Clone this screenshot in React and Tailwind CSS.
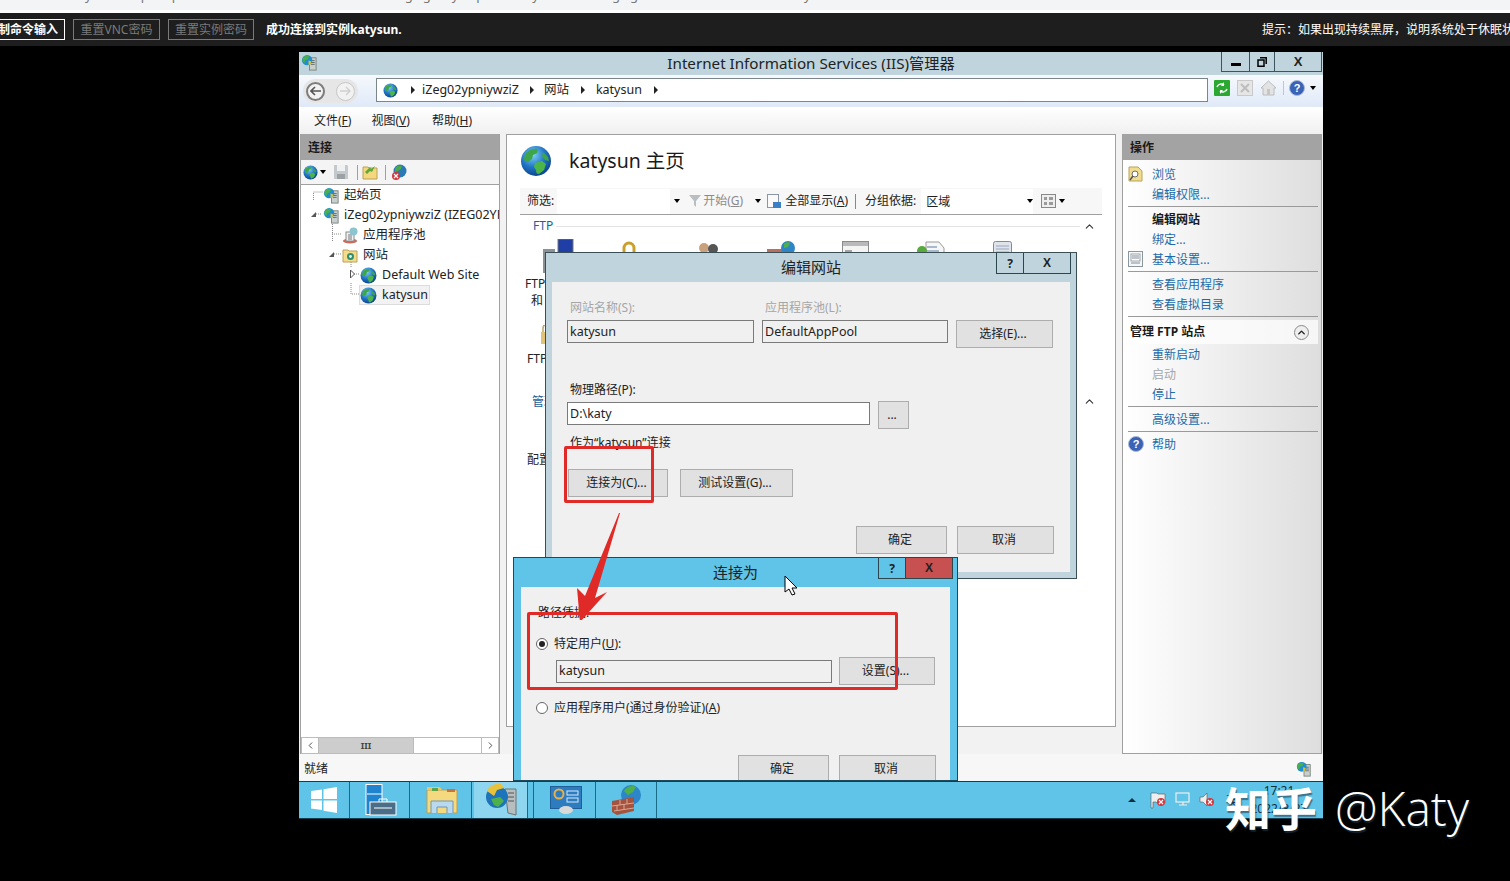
import { ChevronLeft, ChevronRight, ChevronUp } from "lucide-react";

const LINK = "text-[#1d6aa8]";

// --- small drawings ---
function Globe({ size = 16, className = "" }) {
  return (
    <svg width={size} height={size} viewBox="0 0 32 32" className={className}>
      <defs>
        <radialGradient id="globeFill" cx="40%" cy="30%" r="75%">
          <stop offset="0%" stopColor="#7fd0f5" />
          <stop offset="55%" stopColor="#1f74c4" />
          <stop offset="100%" stopColor="#0c3f86" />
        </radialGradient>
      </defs>
      <circle cx="16" cy="16" r="15" fill="url(#globeFill)" />
      <path d="M7 7c3-3 8-4 11-3l-1 4-4 2-1 4-4 3-4-2c0-3 1-6 3-8z" fill="#3fa648" />
      <path d="M15 18l7-2 4 3-2 6-5 4c-2 0-3-1-3-4l-2-3z" fill="#4cb548" />
      <path d="M23 7l5 5 1 4-4-1-3-4z" fill="#3fa648" />
    </svg>
  );
}

function ServerGlobe({ size = 17 }) {
  return (
    <svg width={size} height={size} viewBox="0 0 18 18">
      <rect x="9" y="4" width="7" height="13" fill="#c9cfcf" stroke="#79857f" />
      <path d="M10.5 7h4M10.5 9h4M10.5 11h4" stroke="#5d6b66" />
      <circle cx="6.5" cy="6.5" r="5.5" fill="#1f8fd0" />
      <path d="M2.5 3.5c2-2 5-2 6-1l-1 3-3 1-1 3-2-2c0-2 0-3 1-4z" fill="#49b04b" />
      <path d="M8 7l3 1-1 3-2 1z" fill="#d9c23c" />
    </svg>
  );
}

function Caret({ className = "" }) {
  return <span className={`inline-block border-x-[3px] border-t-[4px] border-x-transparent border-t-black ${className}`} />;
}

function CrumbArrow() {
  return <span className="inline-block border-y-[4px] border-l-[4px] border-y-transparent border-l-[#222]" />;
}

function FolderGlobe() {
  return (
    <svg width="16" height="16" viewBox="0 0 16 16">
      <path d="M1 3h5l1 1h8v11H1z" fill="#f5dc8c" stroke="#b9a05a" />
      <circle cx="8.5" cy="9.5" r="3.5" fill="#2f8f6f" />
      <circle cx="8.5" cy="9.5" r="1.4" fill="#e7f2ea" />
    </svg>
  );
}

function PoolIcon() {
  return (
    <svg width="17" height="17" viewBox="0 0 17 17">
      <ellipse cx="8" cy="14" rx="7" ry="2.5" fill="#c96a5a" />
      <rect x="4" y="5" width="8" height="9" fill="#f1f1f1" stroke="#8a8a8a" />
      <path d="M6 8h4M6 10h4M6 12h4" stroke="#777" />
      <circle cx="11.5" cy="4.5" r="4" fill="#8cc4cf" />
    </svg>
  );
}

function HelpIcon({ size = 16 }) {
  return (
    <svg width={size} height={size} viewBox="0 0 16 16">
      <circle cx="8" cy="8" r="7.5" fill="#3a62b5" stroke="#a9b8d8" />
      <text x="8" y="12" fontSize="11" fontWeight="700" textAnchor="middle" fill="#fff" fontFamily="Liberation Sans, sans-serif">?</text>
    </svg>
  );
}

function RedX({ x, y }) {
  return (
    <g>
      <circle cx={x} cy={y} r="4" fill="#d2383f" />
      <path d={`M${x - 2} ${y - 2}l4 4m0-4l-4 4`} stroke="#fff" strokeWidth="1.1" />
    </g>
  );
}

// --- pieces of the classic dialog ---
function Btn({ children, className = "" }) {
  return (
    <div className={`flex shrink-0 items-center justify-center border border-[#adadad] bg-[#e1e1e1] pr-[3px] text-[12px] text-[#222] ${className}`}>
      {children}
    </div>
  );
}

function Field({ children, className = "" }) {
  return (
    <div className={`flex h-[23px] shrink-0 items-center border border-[#7a7a7a] px-[2px] pt-px text-[12.5px] text-[#222] ${className}`}>
      {children}
    </div>
  );
}

function DialogTitle({ title, closeClass, rightClass }) {
  return (
    <div className="relative h-[29px] text-center text-[15px] leading-[29px] text-[#222]">
      {title}
      <div className={`absolute top-0 flex h-[21px] border-x border-b border-[#2c4650] text-[12px] font-bold ${rightClass}`}>
        <div className="flex w-[27px] items-center justify-center border-r border-[#2c4650]">?</div>
        <div className={`flex w-[46px] items-center justify-center font-['Liberation_Sans',sans-serif] ${closeClass}`}>X</div>
      </div>
    </div>
  );
}

function EditSiteDialog() {
  return (
    <div className="absolute left-[246px] top-[200px] z-10 h-[327px] w-[532px] border border-[#3a4e55] bg-[#bfd4dc]">
      <DialogTitle title="编辑网站" closeClass="" rightClass="right-[5px]" />
      <div className="mx-[6px] h-[290px] bg-[#f0f0f0] pl-[15px] pr-[16px] pt-[17px] text-[12px] text-[#222]">
        <div className="flex leading-[17px] text-[#a6a6a6]">
          <div className="w-[195px] pl-[3px]">网站名称(S):</div>
          <div className="pl-[3px]">应用程序池(L):</div>
        </div>
        <div className="mt-[4px] flex items-start">
          <Field className="w-[187px]">katysun</Field>
          <Field className="ml-[8px] w-[186px]">DefaultAppPool</Field>
          <Btn className="ml-[8px] h-[28px] w-[97px]">选择(E)...</Btn>
        </div>
        <div className="mt-[33px] pl-[3px] leading-[17px]">物理路径(P):</div>
        <div className="mt-[3px] flex items-start">
          <Field className="mt-px w-[303px] bg-white">D:\katy</Field>
          <Btn className="ml-[8px] h-[28px] w-[31px]">...</Btn>
        </div>
        <div className="mt-[5px] pl-[3px] leading-[17px]">作为“katysun”连接</div>
        <div className="ml-px mt-[18px] flex gap-[12px]">
          <Btn className="h-[28px] w-[100px] border-[#3c7fb1]">连接为(C)...</Btn>
          <Btn className="h-[28px] w-[113px]">测试设置(G)...</Btn>
        </div>
        <div className="mt-[29px] flex justify-end gap-[10px]">
          <Btn className="h-[28px] w-[91px]">确定</Btn>
          <Btn className="h-[28px] w-[97px]">取消</Btn>
        </div>
      </div>
    </div>
  );
}

function Radio({ checked }) {
  return (
    <span className="flex h-[12px] w-[12px] items-center justify-center rounded-full border border-[#666] bg-white">
      {checked && <span className="h-[6px] w-[6px] rounded-full bg-[#222]" />}
    </span>
  );
}

function ConnectAsDialog() {
  return (
    <div className="absolute left-[214px] top-[505px] z-20 h-[224px] w-[445px] overflow-hidden border border-[#1c4a5c] bg-[#5fc4e8]">
      <DialogTitle title="连接为" closeClass="bg-[#c75050]" rightClass="right-[4px]" />
      <div className="mx-[7px] h-[201px] bg-[#f0f0f0] pl-[17px] pr-[14px] pt-[17px] text-[12px] text-[#222]">
        <div className="leading-[17px]">路径凭据:</div>
        <div className="-ml-[2px] mt-[14px] flex items-center gap-[6px] leading-[17px]">
          <Radio checked />
          <span>特定用户(<u>U</u>):</span>
        </div>
        <div className="ml-[18px] mt-[5px] flex items-center">
          <Field className="w-[276px]">katysun</Field>
          <Btn className="ml-[7px] h-[28px] w-[96px]">设置(S)...</Btn>
        </div>
        <div className="-ml-[2px] mt-[14px] flex items-center gap-[6px] leading-[17px]">
          <Radio />
          <span>应用程序用户(通过身份验证)(<u>A</u>)</span>
        </div>
        <div className="mt-[39px] flex justify-end gap-[10px]">
          <Btn className="h-[28px] w-[91px]">确定</Btn>
          <Btn className="h-[28px] w-[97px]">取消</Btn>
        </div>
      </div>
    </div>
  );
}

// --- left tree ---
const treeRows = [
  { label: "起始页", pad: 22, slot: "w-[21px]", icon: <ServerGlobe /> },
  { label: "iZeg02ypniywziZ (IZEG02YPNIYWZIZ\\Administrator)", pad: 22, slot: "w-[21px]", icon: <ServerGlobe /> },
  { label: "应用程序池", pad: 41, slot: "w-[21px]", icon: <PoolIcon /> },
  { label: "网站", pad: 41, slot: "w-[21px]", icon: <FolderGlobe /> },
  { label: "Default Web Site", pad: 59, slot: "w-[22px]", icon: <Globe size={17} /> },
  { label: "katysun", pad: 59, slot: "w-[22px]", icon: <Globe size={17} />, selected: true },
];

function Tree() {
  return (
    <div className="relative flex-1 overflow-hidden text-[12.5px] text-[#222]">
      <svg className="absolute left-0 top-0" width="90" height="125">
        <g fill="none" stroke="#888" strokeDasharray="1 1">
          <path d="M12.5 15V7h9" />
          <path d="M15 29h6M31.5 37v20M31 49h9M33 69h7" />
          <path d="M50 77v6M53 89h5M50 98v11h8" />
        </g>
        <path d="M10 32l5-5v5z" fill="#555" />
        <path d="M28 72l5-5v5z" fill="#555" />
        <path d="M49.500 85l4 4-4 4z" fill="#fff" stroke="#555" />
      </svg>
      {treeRows.map((row) => (
        <div key={row.label} className="relative flex h-[20px] items-center whitespace-nowrap" style={{ paddingLeft: row.pad }}>
          {row.selected && <span className="absolute left-[58px] top-0 h-[20px] w-[71px] border border-[#dcdcdc] bg-[#f2f2f2]" />}
          <span className={`relative flex shrink-0 items-center ${row.slot}`}>{row.icon}</span>
          <span className="relative">{row.label}</span>
        </div>
      ))}
    </div>
  );
}

function LeftPanel() {
  return (
    <div className="flex w-[200px] shrink-0 flex-col border-x border-[#a0a0a0] bg-white">
      <div className="h-[26px] bg-[#a3a3a3] pl-[7px] text-[12px] font-bold leading-[28px] text-[#1a1a1a]">连接</div>
      <div className="flex h-[25px] items-center border-b border-[#a0a0a0] bg-[#f4f4f4] pl-[2px]">
        <Globe size={15} />
        <Caret className="ml-[2px]" />
        <svg width="16" height="16" viewBox="0 0 16 16" className="ml-[7px]">
          <path d="M1 1h13l1 1v13H1z" fill="#c3c9cc" />
          <rect x="4" y="1" width="8" height="6" fill="#eef0f1" />
          <rect x="4" y="10" width="8" height="5" fill="#9aa2a6" />
        </svg>
        <span className="ml-[8px] h-[15px] w-px bg-[#a0a0a0]" />
        <svg width="16" height="16" viewBox="0 0 16 16" className="ml-[4px]">
          <path d="M1 3h5l1 1h8v11H1z" fill="#f5d77e" stroke="#b8a258" />
          <path d="M3 8l5-5 1 2 4-3-3 6-2-1-3 3z" fill="#5fa83a" />
        </svg>
        <span className="ml-[7px] h-[15px] w-px bg-[#a0a0a0]" />
        <svg width="17" height="17" viewBox="0 0 17 17" className="ml-[5px]">
          <circle cx="9" cy="7" r="6.500" fill="#2b78b6" />
          <path d="M4 4c2-3 6-3 7-2l-1 3-3 2-3 1z" fill="#48a94a" />
          <RedX x={5} y={12} />
        </svg>
      </div>
      <Tree />
      <div className="flex h-[17px] items-stretch border border-[#bcbcbc] bg-white text-[#444]">
        <div className="flex w-[17px] items-center justify-center border-r border-[#bcbcbc]"><ChevronLeft size={11} /></div>
        <div className="flex w-[95px] items-center justify-center border-r border-[#bcbcbc] bg-[#cdcdcd] text-[9px] font-bold leading-none">III</div>
        <div className="flex-1" />
        <div className="flex w-[17px] items-center justify-center border-l border-[#bcbcbc]"><ChevronRight size={11} /></div>
      </div>
    </div>
  );
}

// --- centre pane ---
function FeatureIcons() {
  return (
    <div className="ml-[23px] flex h-[34px] shrink-0 items-start text-[0px]">
      <svg width="34" height="34" viewBox="0 0 34 34" className="mt-[-1px]">
        <rect x="0" y="10" width="12" height="24" fill="#8b9296" />
        <rect x="15" y="0" width="15" height="14" fill="#1f3fa6" stroke="#777" />
      </svg>
      <svg width="16" height="30" viewBox="0 0 16 30" className="ml-[44px] mt-[1px]">
        <path d="M3 14V7a5 5 0 0 1 10 0v7" fill="none" stroke="#caa02a" strokeWidth="3" />
      </svg>
      <svg width="24" height="30" viewBox="0 0 24 30" className="ml-[59px] mt-[1px]">
        <circle cx="8" cy="7" r="5" fill="#c9a27d" />
        <circle cx="17" cy="8" r="5" fill="#555" />
        <rect x="2" y="11" width="20" height="8" fill="#8a8a7a" />
      </svg>
      <svg width="32" height="30" viewBox="0 0 32 30" className="ml-[47px] mt-[1px]">
        <rect x="0" y="8" width="20" height="8" fill="#b7705f" />
        <circle cx="21" cy="7" r="7" fill="#2f86c6" />
        <path d="M17 3c2-2 5-2 6-1l-2 4-4 1z" fill="#4fb04b" />
      </svg>
      <svg width="30" height="30" viewBox="0 0 30 30" className="ml-[43px] mt-[1px]">
        <rect x="0.500" y="0.500" width="26" height="18" fill="#f4f4f4" stroke="#8b8b8b" />
        <rect x="1" y="1" width="25" height="4" fill="#b9b9b9" />
        <path d="M3 10h7M3 13h5" stroke="#555" />
      </svg>
      <svg width="30" height="30" viewBox="0 0 30 30" className="ml-[45px] mt-[1px]">
        <path d="M9 1h13l5 6v12H9z" fill="#f6f6f6" stroke="#999" />
        <circle cx="5" cy="10" r="5" fill="#58aa3c" />
        <path d="M10 6h10M10 10h12" stroke="#5a7aa5" />
      </svg>
      <svg width="24" height="30" viewBox="0 0 24 30" className="ml-[45px] mt-[1px]">
        <rect x="1.500" y="0.500" width="18" height="20" rx="2" fill="#dfe3ea" stroke="#7f8aa0" />
        <path d="M4 5h13M4 8h13M4 11h13" stroke="#9aa7c0" />
      </svg>
    </div>
  );
}

function CenterPane() {
  return (
    <div className="flex h-[593px] w-[610px] shrink-0 flex-col border border-[#a0a0a0] bg-white pl-[13px] pr-[13px] text-[12px] text-[#222]">
      <div className="flex h-[53px] shrink-0 items-center pb-[2px]">
        <Globe size={32} />
        <span className="ml-[17px] text-[19.5px] text-[#1a1a1a]">katysun 主页</span>
      </div>
      <div className="flex h-[27px] shrink-0 items-center border-b border-[#a0a0a0] bg-[#f7f7f7] pl-[7px] text-[12px]">
        <span>筛选:</span>
        <span className="ml-[3px] h-[25px] w-[113px] bg-white" />
        <Caret className="ml-[4px]" />
        <svg width="14" height="14" viewBox="0 0 14 14" className="ml-[8px]"><path d="M1 1h12L8 7v6l-2-2V7z" fill="#b9bec2" /></svg>
        <span className="ml-[1px] text-[#8a8a8a]">开始(<u>G</u>)</span>
        <Caret className="ml-[12px] border-t-[#999]" />
        <svg width="16" height="16" viewBox="0 0 16 16" className="ml-[5px]">
          <rect x="1.500" y="1.500" width="11" height="13" fill="#fafafa" stroke="#8a96a6" />
          <rect x="7" y="9" width="8" height="6" fill="#3b7fc4" />
        </svg>
        <span className="ml-[3px]">全部显示(<u>A</u>)</span>
        <span className="ml-[7px] h-[15px] w-px bg-[#888]" />
        <span className="ml-[9px]">分组依据:</span>
        <span className="ml-[5px] h-[25px] w-[112px] bg-white pl-[5px] leading-[25px]">区域</span>
        <Caret className="-ml-[6px]" />
        <svg width="16" height="14" viewBox="0 0 16 14" className="ml-[8px]">
          <rect x="0.500" y="0.500" width="14" height="13" fill="#eee" stroke="#888" />
          <path d="M3 3h3v3H3zM8 3h4v3H8zM3 8h3v3H3zM8 8h4v3H8z" fill="#9a9a9a" />
        </svg>
        <Caret className="ml-[2px]" />
      </div>
      <div className="flex h-[22px] shrink-0 items-center pl-[13px] pr-[6px]">
        <span className="text-[#1d5f99]">FTP</span>
        <span className="ml-[3px] h-px flex-1 bg-[#e4e4e4]" />
        <ChevronUp size={13} className="ml-[3px] text-[#333]" />
      </div>
      <div className="h-[3px] shrink-0" />
      <FeatureIcons />
      <div className="ml-[5px] mt-[1px] leading-[17px]">FTP</div>
      <div className="ml-[11px] leading-[17px]">和</div>
      <svg width="10" height="20" viewBox="0 0 10 20" className="ml-[20px] mt-[16px] shrink-0">
        <rect x="1" y="7" width="9" height="12" fill="#e2c37a" />
        <path d="M3 7V3a3 3 0 0 1 6 0v4" fill="none" stroke="#b9a66d" strokeWidth="1.500" />
      </svg>
      <div className="ml-[7px] mt-[5px] leading-[17px]">FTP</div>
      <div className="mt-[26px] flex h-[17px] shrink-0 items-center pr-[6px]">
        <span className="ml-[12px] text-[#1d5f99]">管理</span>
        <ChevronUp size={13} className="ml-auto text-[#333]" />
      </div>
      <div className="ml-[7px] mt-[41px] leading-[17px]">配置</div>
    </div>
  );
}

// --- right actions ---
function ActionDivider() {
  return <div className="mb-[3px] ml-[5px] mr-[3px] mt-px h-px bg-[#9a9a9a]" />;
}

function Action({ label, disabled, bold, icon }) {
  const color = bold ? "font-bold text-[#1a1a1a]" : disabled ? "text-[#a6a6a6]" : LINK;
  return (
    <div className={`relative flex h-[20px] items-center pl-[29px] text-[12px] ${color}`}>
      {icon && <span className="absolute left-[5px] top-[1px]">{icon}</span>}
      {label}
    </div>
  );
}

function RightPanel() {
  return (
    <div className="w-[200px] shrink-0 border-x border-b border-[#a0a0a0] bg-gradient-to-r from-white to-[#dedede]">
      <div className="h-[26px] bg-[#a3a3a3] pl-[7px] text-[12px] font-bold leading-[28px] text-[#1a1a1a]">操作</div>
      <div className="pt-[5px]">
        <Action
          label="浏览"
          icon={
            <svg width="15" height="16" viewBox="0 0 15 16">
              <path d="M1 1h9l4 4v10H1z" fill="#f2dc8e" stroke="#b9a35c" />
              <circle cx="7" cy="8" r="3" fill="#fff" stroke="#6d6d6d" />
              <path d="M5 10l-3 4" stroke="#555" strokeWidth="1.500" />
            </svg>
          }
        />
        <Action label="编辑权限..." />
        <ActionDivider />
        <Action label="编辑网站" bold />
        <Action label="绑定..." />
        <Action
          label="基本设置..."
          icon={
            <svg width="15" height="16" viewBox="0 0 15 16">
              <rect x="0.500" y="0.500" width="14" height="15" fill="#f7f7f7" stroke="#8a96a0" />
              <rect x="3" y="3" width="9" height="7" fill="#fff" stroke="#9aa4ae" />
              <path d="M4 5h7M4 7h7M3 12h9" stroke="#7e8a94" />
            </svg>
          }
        />
        <ActionDivider />
        <Action label="查看应用程序" />
        <Action label="查看虚拟目录" />
        <div className="ml-[5px] mr-[3px] mt-px h-px bg-[#9a9a9a]" />
        <div className="mb-px ml-[5px] mr-[3px] mt-[3px] flex h-[24px] items-center justify-between bg-gradient-to-r from-white to-[#f6f6f6] pl-[2px] pr-[9px] text-[12px] font-bold text-[#1a1a1a]">
          <span>管理 FTP 站点</span>
          <span className="flex h-[15px] w-[15px] items-center justify-center rounded-full border border-[#8a8a8a] bg-[#eeeeee]">
            <ChevronUp size={11} strokeWidth={3} />
          </span>
        </div>
        <Action label="重新启动" />
        <Action label="启动" disabled />
        <Action label="停止" />
        <ActionDivider />
        <Action label="高级设置..." />
        <ActionDivider />
        <Action label="帮助" icon={<HelpIcon />} />
      </div>
    </div>
  );
}

// --- window chrome ---
function TitleBar() {
  return (
    <div className="relative h-[23px] bg-[#bfd4dc] text-center text-[15.2px] leading-[23px] text-[#222]">
      <span className="absolute left-[2px] top-[2px]"><ServerGlobe /></span>
      Internet Information Services (IIS)管理器
      <div className="absolute right-[1px] top-0 flex h-[20px] border-x border-b border-[#3b5560]">
        <div className="flex w-[28px] items-end justify-center border-r border-[#3b5560] pb-[5px]"><span className="h-[3px] w-[10px] bg-black" /></div>
        <div className="flex w-[25px] items-center justify-center border-r border-[#3b5560]">
          <svg width="10" height="10" viewBox="0 0 10 10"><path d="M3 0.800h6.200V7M1 3h6v6.200H1z" fill="none" stroke="#000" strokeWidth="1.500" /></svg>
        </div>
        <div className="flex w-[46px] items-center justify-center font-['Liberation_Sans',sans-serif] text-[13px] font-bold">X</div>
      </div>
    </div>
  );
}

function AddressBar() {
  return (
    <div className="flex h-[32px] items-start bg-gradient-to-b from-[#f6f9fd] to-[#dfe9f7] pt-[3px]">
      <div className="ml-[4px] mt-[1px] flex h-[24px] w-[55px] items-center justify-between rounded-full bg-[#e6e6e6] px-[3px]">
        <span className="flex h-[19px] w-[19px] items-center justify-center rounded-full border-2 border-[#7d7d7d] bg-[#f2f2f2] text-[#555]">
          <svg width="11" height="10" viewBox="0 0 11 10"><path d="M5 1L1 5l4 4M1 5h10" fill="none" stroke="#555" strokeWidth="1.600" /></svg>
        </span>
        <span className="flex h-[19px] w-[19px] items-center justify-center rounded-full border border-[#c7c7c7] bg-[#f2f2f2]">
          <svg width="11" height="10" viewBox="0 0 11 10"><path d="M6 1l4 4-4 4M10 5H0" fill="none" stroke="#cfcfcf" strokeWidth="1.400" /></svg>
        </span>
      </div>
      <div className="ml-[18px] flex h-[24px] w-[832px] items-center border border-[#7b868c] bg-white pl-[6px] text-[12.5px] text-[#222]">
        <Globe size={15} />
        <span className="ml-[13px]"><CrumbArrow /></span>
        <span className="ml-[7px]">iZeg02ypniywziZ</span>
        <span className="ml-[11px]"><CrumbArrow /></span>
        <span className="ml-[10px]">网站</span>
        <span className="ml-[12px]"><CrumbArrow /></span>
        <span className="ml-[11px]">katysun</span>
        <span className="ml-[12px]"><CrumbArrow /></span>
      </div>
      <div className="ml-[6px] mt-[2px] flex items-center">
        <svg width="16" height="16" viewBox="0 0 16 16">
          <rect width="16" height="16" rx="1" fill="#2aa82f" />
          <path d="M3 7c1-3 5-4 7-2M13 9c-1 3-5 4-7 2" fill="none" stroke="#fff" strokeWidth="1.500" />
          <path d="M10 2v4H7zM6 14v-4h3z" fill="#fff" />
        </svg>
        <svg width="16" height="16" viewBox="0 0 16 16" className="ml-[7px]">
          <rect x="0.500" y="0.500" width="15" height="15" fill="#e6e6e6" stroke="#c9c9c9" />
          <path d="M4 4l8 8m0-8l-8 8" stroke="#bdbdbd" strokeWidth="2" />
        </svg>
        <svg width="17" height="16" viewBox="0 0 17 16" className="ml-[7px]">
          <path d="M8.500 1L1 8h2v7h11V8h2z" fill="#e3e3e3" stroke="#bcbcbc" />
          <rect x="7" y="9" width="3" height="6" fill="#c6c6c6" />
        </svg>
        <span className="ml-[6px] h-[14px] w-px bg-[#bfc6cf]" />
        <span className="ml-[5px]"><HelpIcon /></span>
        <Caret className="ml-[5px]" />
      </div>
    </div>
  );
}

function MenuBar() {
  return (
    <div className="flex h-[27px] items-center bg-gradient-to-b from-white to-[#f0f0f0] pl-[15px] text-[12px] text-[#222]">
      <span>文件(<u>F</u>)</span>
      <span className="ml-[20px]">视图(<u>V</u>)</span>
      <span className="ml-[22px]">帮助(<u>H</u>)</span>
    </div>
  );
}

function Taskbar() {
  const cells = [
    { w: 51, node: (
      <svg width="26" height="26" viewBox="0 0 26 26">
        <path d="M0 4l11-1.500V12H0zM12.500 2.300L26 0v12H12.500zM0 13.500h11V23L0 21.500zM12.500 13.500H26V26l-13.500-2.300z" fill="#fff" />
      </svg>
    ) },
    { w: 58, node: (
      <svg width="32" height="32" viewBox="0 0 32 32">
        <rect x="1" y="0.500" width="16" height="30" fill="#1f84d0" stroke="#fff" />
        <path d="M2 10h15" stroke="#fff" />
        <rect x="5" y="18" width="26" height="13" fill="#4a6d88" stroke="#fff" />
        <path d="M14 18v-3h8v3M9 24h18" fill="none" stroke="#fff" />
      </svg>
    ) },
    { w: 60, node: (
      <svg width="32" height="28" viewBox="0 0 32 28">
        <path d="M1 4h30v23H1z" fill="#f5d97e" stroke="#b79f58" />
        <path d="M1 1h13l2 3H1z" fill="#e8c765" />
        <rect x="6" y="2" width="6" height="3" fill="#5aa54a" />
        <rect x="21" y="3" width="8" height="3" fill="#c8743c" />
        <path d="M5 27V15h22v12" fill="#b9d9ee" stroke="#6f97b5" />
        <path d="M11 27v-6h10v6" fill="#f5d97e" stroke="#6f97b5" />
      </svg>
    ) },
    { w: 54, active: true, node: (
      <svg width="32" height="34" viewBox="0 0 32 34">
        <path d="M20 6h11v26l-8-2z" fill="#b8bdbd" stroke="#6b7272" />
        <circle cx="12" cy="14" r="11" fill="#1e74b8" />
        <path d="M2 8c2-5 8-8 14-7l3 4-7 2-3 6z" fill="#e8c23a" />
        <path d="M6 16l9-2 4 4-6 6-4-2z" fill="#4eb04a" />
        <path d="M23 10h6M23 14h6M23 18h6" stroke="#555" />
      </svg>
    ) },
    { w: 4, node: null },
    { w: 60, node: (
      <svg width="32" height="28" viewBox="0 0 32 28">
        <rect x="0.500" y="0.500" width="31" height="22" fill="#2d7cc0" stroke="#1f5e96" />
        <circle cx="9" cy="8" r="4.500" fill="none" stroke="#e8b04a" strokeWidth="2" />
        <rect x="17" y="5" width="11" height="4" fill="none" stroke="#d5e9f7" />
        <rect x="17" y="12" width="11" height="4" fill="none" stroke="#d5e9f7" />
        <ellipse cx="16" cy="24" rx="7" ry="4" fill="#d9d9d9" />
      </svg>
    ) },
    { w: 59, node: (
      <svg width="32" height="32" viewBox="0 0 32 32">
        <circle cx="20" cy="11" r="10" fill="#2d86c9" />
        <path d="M13 7c3-5 8-6 12-4l-3 5-5 3z" fill="#4fb04b" />
        <path d="M1 17l22-4v14L6 31l-5-3z" fill="#a5533d" />
        <path d="M1 22l22-3M3 27l20-3M9 16v5M16 15v5M6 21v5M13 20v5" stroke="#d9a898" />
      </svg>
    ) },
  ];
  return (
    <div className="relative flex h-[38px] w-[1024px] items-stretch border-y border-[#123f52] bg-[#5fc4e8]">
      {cells.map((cell, i) => (
        <div
          key={i}
          className={`mr-[2px] flex shrink-0 items-center justify-center border-r border-[#1b6a88] ${cell.active ? "bg-[#8ed6ef]" : ""}`}
          style={{ width: cell.w }}
        >
          {cell.node}
        </div>
      ))}
      <div className="ml-auto mr-[6px] flex items-center text-[12px] text-[#10303f]">
        <span className="h-0 w-0 border-x-[4px] border-b-[4px] border-x-transparent border-b-[#10303f]" />
        <svg width="100" height="18" viewBox="0 0 100 18" className="ml-[14px]">
          <path d="M1 2h6l1 1h7v9H7l-1-1H3v6H1z" fill="#eee" stroke="#555" strokeWidth="0.600" />
          <RedX x={11} y={11} />
          <rect x="26" y="2" width="13" height="9" fill="none" stroke="#eee" strokeWidth="1.200" />
          <path d="M29 14h8M33 11v3" stroke="#eee" strokeWidth="1.200" />
          <path d="M50 6h3l4-4v13l-4-4h-3z" fill="#eee" stroke="#555" strokeWidth="0.600" />
          <RedX x={60} y={11} />
          <text x="76" y="14" fontSize="13" fill="#10303f" fontFamily="Noto Sans CJK SC, sans-serif">英</text>
        </svg>
        <div className="-ml-[9px] w-[76px] text-center leading-[18px]">
          <div>17:21</div>
          <div>2022/3/27</div>
        </div>
      </div>
    </div>
  );
}

function ConsoleToolbar() {
  return (
    <div className="flex h-[33px] items-center bg-[#1e1e1e] text-[12px]">
      <div className="flex h-[21px] w-[65px] items-center justify-end whitespace-nowrap border-y border-r border-white pr-[6px] font-bold text-white">制命令输入</div>
      <div className="ml-[8px] flex h-[21px] w-[87px] items-center justify-center border border-[#7a7a7a] text-[#7a7a7a]">重置VNC密码</div>
      <div className="ml-[8px] flex h-[21px] w-[86px] items-center justify-center border border-[#7a7a7a] text-[#7a7a7a]">重置实例密码</div>
      <div className="ml-[12px] font-bold text-white">成功连接到实例katysun.</div>
      <div className="ml-auto w-[248px] overflow-hidden whitespace-nowrap text-white">提示：如果出现持续黑屏，说明系统处于休眠状态</div>
    </div>
  );
}

// the strip above the console only shows the tails of a line of page text
function PageTextTails() {
  return (
    <div className="-mt-[11px] flex whitespace-nowrap text-[13px] leading-[13px] text-[#777]">
      <span className="ml-[85px]">y</span>
      <span className="ml-[49px]">p</span>
      <span className="ml-[23px]">p</span>
      <span className="ml-[225px]">g</span>
      <span className="ml-[10px]">g</span>
      <span className="ml-[21px]">y</span>
      <span className="ml-[18px]">p</span>
      <span className="ml-[48px]">y</span>
      <span className="ml-[73px]">g</span>
      <span className="ml-[10px]">g</span>
      <span className="ml-[166px]">y</span>
    </div>
  );
}

export default function App() {
  return (
    <div className="relative h-[881px] w-[1510px] overflow-hidden bg-black font-['Noto_Sans','Noto_Sans_CJK_SC',sans-serif]">
      <div className="h-[10px] overflow-hidden bg-[#f3f4f5]"><PageTextTails /></div>
      <div className="h-[3px] bg-white" />
      <ConsoleToolbar />

      <div className="relative ml-[299px] mt-[6px] h-[729px] w-[1024px] bg-[#f2f2f2]">
        <TitleBar />
        <AddressBar />
        <MenuBar />
        <div className="flex items-start gap-[6px] px-[1px]">
          <div className="flex h-[620px]"><LeftPanel /></div>
          <CenterPane />
          <div className="flex h-[620px]"><RightPanel /></div>
        </div>
        <div className="relative flex h-[27px] items-center justify-between bg-[#f7f7f7] pl-[5px] pr-[11px] pt-[2px] text-[12px] text-[#222]">
          <span>就绪</span>
          <ServerGlobe size={16} />
        </div>
        <EditSiteDialog />
        <ConnectAsDialog />
      </div>
      <div className="ml-[299px]"><Taskbar /></div>

      {/* red marks drawn on the screenshot */}
      <div className="absolute left-[564px] top-[446px] z-30 h-[57px] w-[90px] rounded-[2px] border-[3px] border-[#e02a28]" />
      <div className="absolute left-[527px] top-[612px] z-30 h-[78px] w-[371px] rounded-[2px] border-[3px] border-[#e02a28]" />
      <svg className="absolute left-[570px] top-[510px] z-30" width="60" height="110" viewBox="0 0 60 110">
        <path d="M50 3L25 88l12-6-27 30-3-34 8 8L49 3z" fill="#e02a28" />
      </svg>
      <svg className="absolute left-[784px] top-[575px] z-30" width="14" height="22" viewBox="0 0 14 22">
        <path d="M1 1v16l4-3 3 6 3-1-3-6h5z" fill="#fff" stroke="#000" />
      </svg>

      <div className="absolute left-[1225px] top-[776px] z-30 flex items-center gap-[18px] whitespace-nowrap text-[46px] leading-[64px] text-white [text-shadow:1px_2px_1px_rgba(30,60,80,0.6)]">
        <span className="font-bold">知乎</span>
        <span className="text-[48px] font-light font-['Open_Sans','Noto_Sans',sans-serif]">@Katy</span>
      </div>
    </div>
  );
}
